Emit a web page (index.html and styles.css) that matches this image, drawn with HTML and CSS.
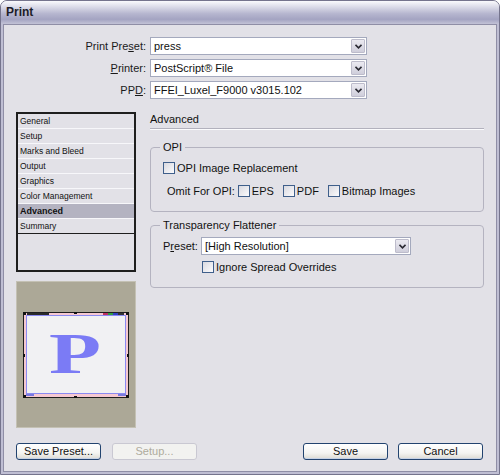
FILE: index.html
```html
<!DOCTYPE html>
<html>
<head>
<meta charset="utf-8">
<title>Print</title>
<link rel="stylesheet" href="styles.css">
</head>
<body>
<div class="window">
  <div class="titlebar">Print</div>
  <div class="client">
    <div class="client-inner">
      <div class="fields">
        <label class="lbl">Print Pre<u>s</u>et:</label>
        <div class="select"><span class="value">press</span><span class="drop"><svg width="7" height="5" viewBox="0 0 7 5"><path d="M0.5 0.8 L3.5 3.8 L6.5 0.8" fill="none" stroke="#2a2a33" stroke-width="1.6"/></svg></span></div>
        <label class="lbl"><u>P</u>rinter:</label>
        <div class="select"><span class="value">PostScript® File</span><span class="drop"><svg width="7" height="5" viewBox="0 0 7 5"><path d="M0.5 0.8 L3.5 3.8 L6.5 0.8" fill="none" stroke="#2a2a33" stroke-width="1.6"/></svg></span></div>
        <label class="lbl">PP<u>D</u>:</label>
        <div class="select"><span class="value">FFEI_Luxel_F9000 v3015.102</span><span class="drop"><svg width="7" height="5" viewBox="0 0 7 5"><path d="M0.5 0.8 L3.5 3.8 L6.5 0.8" fill="none" stroke="#2a2a33" stroke-width="1.6"/></svg></span></div>
      </div>

      <div class="main">
        <div class="leftcol">
          <div class="navlist">
            <div class="item">General</div>
            <div class="item">Setup</div>
            <div class="item">Marks and Bleed</div>
            <div class="item">Output</div>
            <div class="item">Graphics</div>
            <div class="item">Color Management</div>
            <div class="item selected">Advanced</div>
            <div class="item last">Summary</div>
          </div>
          <div class="preview">
            <svg width="106" height="86" viewBox="0 0 106 86">
              <rect x="0.5" y="0.5" width="105" height="85" fill="#f6c9d2" stroke="#1e1e1e" stroke-width="1"/>
              <rect x="3.5" y="3.5" width="99" height="78" fill="#f1f1f3" stroke="#8a8af2" stroke-width="1"/>
              <rect x="4" y="1" width="22" height="2" fill="#2a2a2a"/>
              <rect x="80" y="1" width="5" height="2" fill="#c03060"/>
              <rect x="85" y="1" width="5" height="2" fill="#30a040"/>
              <rect x="90" y="1" width="5" height="2" fill="#3040c0"/>
              <rect x="95" y="1" width="6" height="2" fill="#333"/>
              <rect x="3" y="82" width="8" height="2" fill="#7a7ae0"/>
              <rect x="95" y="82" width="8" height="2" fill="#7a7ae0"/>
              <rect x="0" y="0" width="3" height="3" fill="#111"/>
              <rect x="103" y="0" width="3" height="3" fill="#111"/>
              <rect x="0" y="83" width="3" height="3" fill="#111"/>
              <rect x="103" y="83" width="3" height="3" fill="#111"/>
              <rect x="51" y="0" width="3" height="2" fill="#111"/>
              <rect x="51" y="84" width="3" height="2" fill="#111"/>
              <rect x="0" y="42" width="2" height="3" fill="#111"/>
              <rect x="104" y="42" width="2" height="3" fill="#111"/>
              <text x="26" y="61" font-family="Liberation Serif, serif" font-weight="bold" font-size="58" fill="#7b7bf5" textLength="52" lengthAdjust="spacingAndGlyphs">P</text>
            </svg>
          </div>
        </div>

        <div class="panel">
          <div class="heading">Advanced</div>
          <fieldset class="group opi">
            <legend>OPI</legend>
            <div class="row"><span class="cb"></span><span>OPI Image Replacement</span></div>
            <div class="row omit">
              <span class="omitlbl">Omit For OPI:</span>
              <span class="opt"><span class="cb"></span>EPS</span>
              <span class="opt"><span class="cb"></span>PDF</span>
              <span class="opt"><span class="cb"></span>Bitmap Images</span>
            </div>
          </fieldset>
          <fieldset class="group flat">
            <legend>Transparency Flattener</legend>
            <div class="row preset">
              <span class="plbl">P<u>r</u>eset:</span>
              <div class="select wide"><span class="value">[High Resolution]</span><span class="drop"><svg width="7" height="5" viewBox="0 0 7 5"><path d="M0.5 0.8 L3.5 3.8 L6.5 0.8" fill="none" stroke="#2a2a33" stroke-width="1.6"/></svg></span></div>
            </div>
            <div class="row ignore"><span class="cb"></span><span>Ignore Spread Overrides</span></div>
          </fieldset>
        </div>
      </div>

      <div class="footer">
        <div class="btngroup left">
          <button class="btn">Save Preset...</button>
          <button class="btn disabled">Setup...</button>
        </div>
        <div class="btngroup right">
          <button class="btn">Save</button>
          <button class="btn">Cancel</button>
        </div>
      </div>
    </div>
  </div>
</div>
</body>
</html>
```
FILE: styles.css
```css
* { box-sizing: border-box; }
html, body {
  margin: 0;
  padding: 0;
  width: 500px;
  height: 475px;
  background: #ffffff;
  font-family: "Liberation Sans", Arial, sans-serif;
  font-size: 11px;
  color: #111;
}
.window {
  width: 500px;
  height: 475px;
  border: 1px solid #75748d;
  border-radius: 7px 7px 0 0;
  background: #e2e1e7;
  display: flex;
  flex-direction: column;
  overflow: hidden;
}
.titlebar {
  height: 23px;
  flex: none;
  padding-left: 5px;
  line-height: 23px;
  font-weight: bold;
  font-size: 12px;
  color: #1c1c28;
  background: linear-gradient(#fafafd 0%, #e2e2ed 20%, #b6b6cf 55%, #a4a4c2 80%, #c2c2d6 100%);
}
.client {
  flex: 1;
  display: flex;
  border: solid #bfbed3;
  border-width: 0 2px 2px 2px;
}
.client-inner {
  flex: 1;
  display: flex;
  flex-direction: column;
  border: 1px solid #8f8ea6;
  padding: 12px 12px 0 12px;
  background: #e2e1e7;
}
.fields {
  display: grid;
  grid-template-columns: 130px 217px;
  column-gap: 4px;
  row-gap: 4px;
}
.lbl {
  text-align: right;
  line-height: 18px;
  color: #1a1a1a;
}
u { text-decoration: underline; text-underline-offset: 1px; }
.select {
  display: flex;
  height: 18px;
  border: 1px solid #a4a9bd;
  background: #fff;
}
.select .value {
  flex: 1;
  padding-left: 3px;
  line-height: 16px;
  white-space: nowrap;
  overflow: hidden;
}
.select .drop {
  width: 14px;
  margin: 1px;
  border: 1px solid #bdbccb;
  border-radius: 1px;
  background: linear-gradient(#ebeaf1, #cfcedb);
  display: flex;
  align-items: center;
  justify-content: center;
}
.main {
  margin-top: 13px;
  display: flex;
  gap: 14px;
}
.leftcol {
  width: 120px;
  flex: none;
  display: flex;
  flex-direction: column;
  gap: 9px;
}
.navlist {
  height: 160px;
  border: 2px solid #1e1e1e;
  background: #e2e1e7;
}
.item {
  height: 15px;
  line-height: 14px;
  padding-left: 2px;
  font-size: 8.5px;
  border-bottom: 1px solid #f7f7fa;
  color: #111;
}
.item.selected {
  background: #b4b3c1;
  font-weight: bold;
  font-size: 9px;
}
.item.last { border-bottom: 1px solid #1e1e1e; }
.preview {
  height: 147px;
  background: #aca897;
  border: 1px solid #c4c1b4;
  display: flex;
  align-items: center;
  justify-content: center;
}
.preview svg { display: block; }
.panel {
  width: 334px;
  flex: none;
  display: flex;
  flex-direction: column;
}
.heading {
  height: 17px;
  line-height: 15px;
  border-bottom: 1px solid #b2b1bd;
  box-shadow: 0 1px 0 #fbfbfd;
}
.group {
  margin: 0;
  border: 1px solid #b4b3c0;
  border-radius: 4px;
  padding: 0 8px 0 12px;
}
.group legend {
  padding: 0 3px;
  margin-left: -3px;
  line-height: 14px;
}
.opi { margin-top: 11px; padding-bottom: 13px; }
.flat { margin-top: 6px; padding-bottom: 13px; }
.row {
  display: flex;
  align-items: center;
  height: 14px;
}
.opi .row:first-of-type { margin-top: 7px; }
.row.omit { margin-top: 9px; padding-left: 4px; }
.omitlbl { margin-right: 3px; }
.opt { display: flex; align-items: center; margin-right: 9px; }
.cb {
  width: 12px;
  height: 12px;
  flex: none;
  border: 1px solid #3f5f8b;
  background: linear-gradient(135deg, #d9d9e0, #fbfbfd);
  margin-right: 2px;
}
.row.preset { height: 18px; margin-top: 5px; }
.plbl { width: 38px; flex: none; }
.select.wide { width: 210px; }
.row.ignore { margin-top: 5px; padding-left: 39px; }
.footer {
  margin-top: 15px;
  display: flex;
  justify-content: space-between;
}
.btngroup { display: flex; }
.btngroup.left { gap: 11px; }
.btngroup.right { gap: 10px; margin-right: 1px; }
.btn {
  width: 85px;
  height: 17px;
  padding: 0;
  border: 1px solid #22436f;
  border-radius: 3px;
  background: linear-gradient(#ffffff 0%, #f4f4f2 60%, #dcdad2 100%);
  font-family: "Liberation Sans", Arial, sans-serif;
  font-size: 11px;
  color: #111;
  line-height: 15px;
  box-shadow: inset 0 -1px 0 #c6d2e6;
}
.btn.disabled {
  border-color: #c9c8d2;
  background: #f2f2f0;
  color: #aeab9d;
  box-shadow: none;
}
```
